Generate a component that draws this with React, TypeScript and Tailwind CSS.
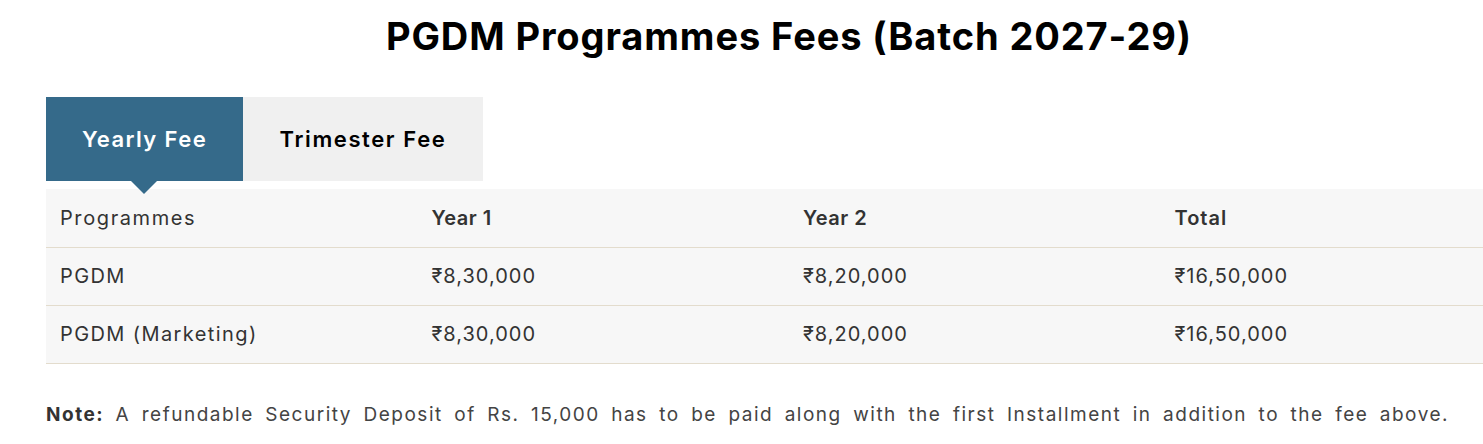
import { useState } from "react";

const rows = [
  { name: "PGDM", y1: "₹8,30,000", y2: "₹8,20,000", total: "₹16,50,000" },
  { name: "PGDM (Marketing)", y1: "₹8,30,000", y2: "₹8,20,000", total: "₹16,50,000" },
];

const font = { fontFamily: "Inter, 'Noto Sans', sans-serif" };

export default function App() {
  const [tab, setTab] = useState<"yearly" | "trimester">("yearly");

  return (
    <div className="w-[1483px] h-[444px] overflow-hidden bg-white" style={font}>
      <div className="ml-[46px] w-[1486px]">
        <h1 className="pt-[13px] text-center text-[38px] font-bold leading-[46px] tracking-[0.9px] text-black">
          PGDM Programmes Fees (Batch 2027-29)
        </h1>

        <div className="mt-[38px] flex">
          <button
            onClick={() => setTab("yearly")}
            className={`relative h-[84px] w-[197px] text-[22px] font-semibold tracking-[1.4px] ${
              tab === "yearly" ? "bg-[#356a8a] text-white" : "bg-[#f0f0f0] text-black"
            }`}
          >
            Yearly Fee
            {tab === "yearly" && (
              <span className="absolute left-[85px] top-[84px] z-10 h-0 w-0 border-x-[13px] border-t-[13px] border-x-transparent border-t-[#356a8a]" />
            )}
          </button>
          <button
            onClick={() => setTab("trimester")}
            className={`relative h-[84px] w-[240px] text-[22px] font-semibold tracking-[1.6px] ${
              tab === "trimester" ? "bg-[#356a8a] text-white" : "bg-[#f0f0f0] text-black"
            }`}
          >
            Trimester Fee
          </button>
        </div>

        <table className="mt-[8px] w-full table-fixed border-collapse bg-[#f7f7f7] text-[20px] tracking-[1px] text-[#333]">
          <thead>
            <tr className="h-[58px] border-b border-[#e3dccd]">
              <th className="px-[14px] text-left font-normal tracking-[1.6px]">Programmes</th>
              <th className="px-[14px] text-left font-semibold tracking-[0.5px]">Year 1</th>
              <th className="px-[14px] text-left font-semibold tracking-[0.5px]">Year 2</th>
              <th className="px-[14px] text-left font-semibold">Total</th>
            </tr>
          </thead>
          <tbody>
            {rows.map((r) => (
              <tr key={r.name} className="h-[58px] border-b border-[#e3dccd]">
                <td className="px-[14px] tracking-[1.4px]">{r.name}</td>
                <td className="px-[14px]">{r.y1}</td>
                <td className="px-[14px]">{r.y2}</td>
                <td className="px-[14px]">{r.total}</td>
              </tr>
            ))}
          </tbody>
        </table>

        <p className="mt-[38px] w-[1403px] text-justify text-[19px] leading-[26px] tracking-[1.5px] text-[#444] [text-align-last:justify]">
          <b className="text-[#333]">Note:</b> A refundable Security Deposit of Rs. 15,000 has to be paid along with the first Installment in addition to the fee above.
        </p>
      </div>
    </div>
  );
}
